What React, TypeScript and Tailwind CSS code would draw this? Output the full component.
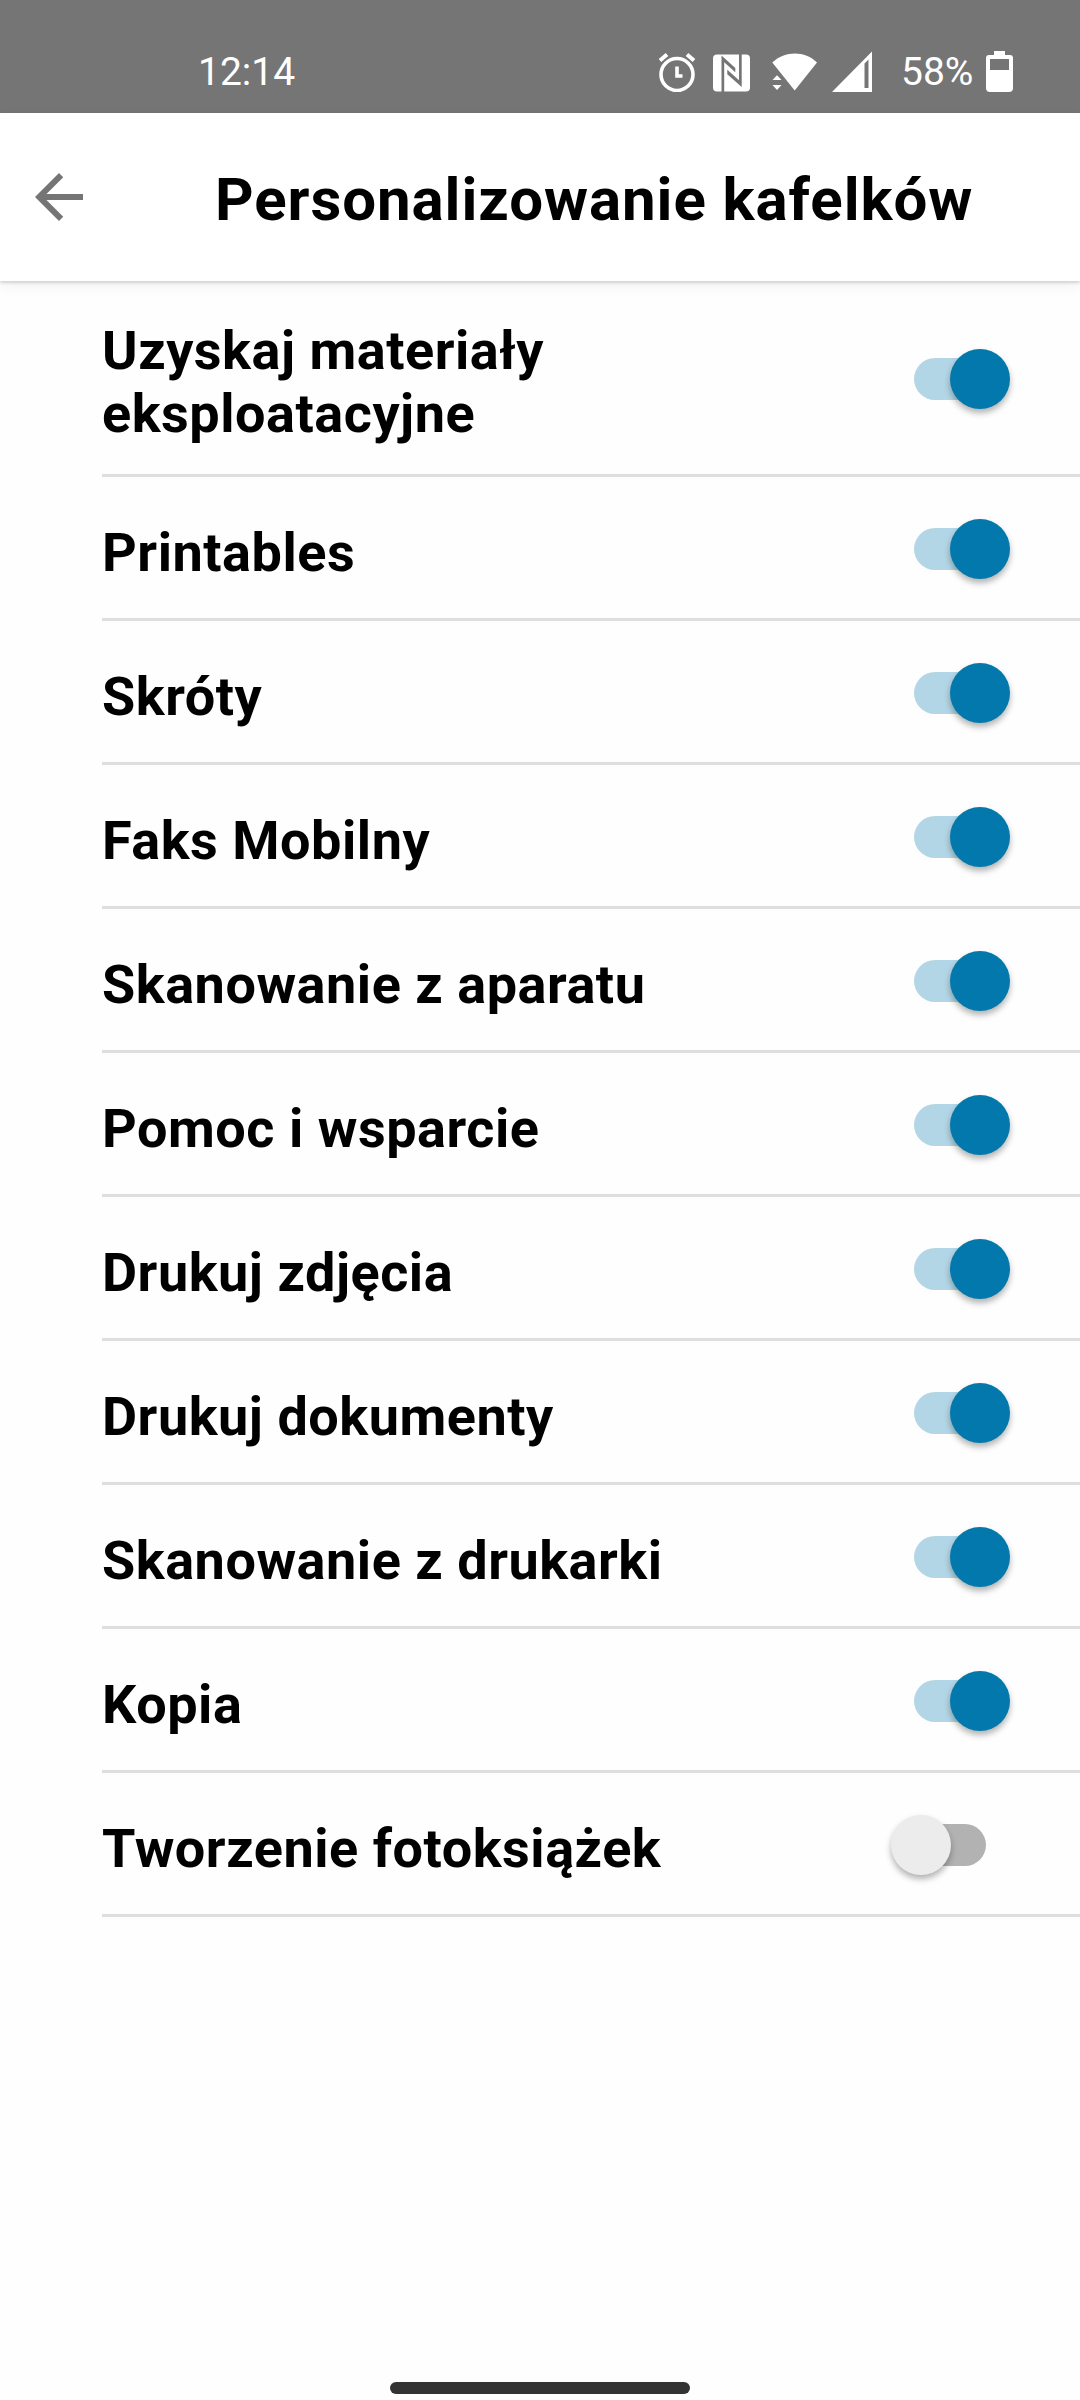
import { useState } from 'react';
import clsx from 'clsx';

const initialTiles = [
  { id: 'supplies', label: 'Uzyskaj materiały eksploatacyjne', enabled: true },
  { id: 'printables', label: 'Printables', enabled: true },
  { id: 'shortcuts', label: 'Skróty', enabled: true },
  { id: 'fax', label: 'Faks Mobilny', enabled: true },
  { id: 'camera-scan', label: 'Skanowanie z aparatu', enabled: true },
  { id: 'help', label: 'Pomoc i wsparcie', enabled: true },
  { id: 'photos', label: 'Drukuj zdjęcia', enabled: true },
  { id: 'documents', label: 'Drukuj dokumenty', enabled: true },
  { id: 'printer-scan', label: 'Skanowanie z drukarki', enabled: true },
  { id: 'copy', label: 'Kopia', enabled: true },
  { id: 'photobooks', label: 'Tworzenie fotoksiążek', enabled: false },
];

function StatusBar() {
  return (
    <div className="flex h-[113px] items-start bg-[#757575] pt-[51px] pl-[198px] text-white">
      <span className="mt-px w-[459px] text-[39px] leading-[41px]">12:14</span>
      <svg className="mr-4 h-[41px] w-10" viewBox="0 0 40 41" fill="none" stroke="currentColor">
        <circle cx="20" cy="23.5" r="16" strokeWidth="3.6" />
        <path d="M20 15.5v9.5h5.5" strokeWidth="3.6" />
        <path d="M3 9.5l7-6M37 9.5l-7-6" strokeWidth="4" />
      </svg>
      <svg className="mr-5 h-[41px] w-[37px]" viewBox="0 0 37 41">
        <rect y="3.5" width="37" height="37" rx="4" fill="currentColor" />
        <g fill="#757575">
          <path d="M8.5 4.5L22.3 17V21.3L11.2 11.3V41H8.5Z" />
          <path d="M28.7 3V36L14.3 23.3V18.7L26 29.2V3Z" />
        </g>
      </svg>
      <svg className="mr-[14px] h-[41px] w-[48px]" viewBox="0 0 48 41" fill="currentColor">
        <path d="M2.3 11.5C15 -.6 35 -.6 47 11.5L24.7 39.5Z" />
        <path d="M2.5 29L7 24.3L11.5 29ZM2.5 34H11.5L7 39Z" />
      </svg>
      <svg className="mr-[28px] h-[41px] w-[41px]" viewBox="0 0 41 41" fill="currentColor">
        <path fillRule="evenodd" d="M0 41L40 .5V41ZM32.5 12.5V37H36.5V8.5Z" />
      </svg>
      <span className="mt-px w-[85px] text-[39px] leading-[41px]">58%</span>
      <svg className="h-[41px] w-[27px]" viewBox="0 0 27 41" fill="currentColor">
        <path
          fillRule="evenodd"
          d="M8 0H19V4H24Q27 4 27 7V37Q27 41 23 41H4Q0 41 0 37V7Q0 4 3 4H8ZM4 8V19H23V8Z"
        />
      </svg>
    </div>
  );
}

function Header() {
  return (
    <header className="flex h-[168px] items-center bg-white pl-[23px] shadow-[0_2px_3px_rgba(0,0,0,0.14),0_4px_14px_rgba(0,0,0,0.06)]">
      <button type="button" aria-label="Wstecz" className="mr-[120px] text-[#757575]">
        <svg className="size-[72px]" viewBox="0 0 24 24" fill="currentColor">
          <path d="M20 11H7.83l5.59-5.59L12 4l-8 8 8 8 1.41-1.41L7.83 13H20v-2z" />
        </svg>
      </button>
      <h1 className="mt-[5px] text-[60px] leading-[70px] font-bold tracking-[0.93px]">
        Personalizowanie kafelków
      </h1>
    </header>
  );
}

interface SwitchProps {
  label: string;
  checked: boolean;
  onChange: () => void;
}

function Switch({ label, checked, onChange }: SwitchProps) {
  return (
    <button
      type="button"
      role="switch"
      aria-label={label}
      aria-checked={checked}
      onClick={onChange}
      className={clsx(
        'mt-[3px] flex h-[60px] w-24 shrink-0 items-center',
        checked ? 'mr-[70px] justify-end' : 'mr-[94px]',
      )}
    >
      <span
        className={clsx(
          'flex h-[42px] w-[84px] items-center rounded-full',
          checked ? 'mr-3 bg-[#b2d6e6]' : 'ml-3 bg-[#b2b2b2]',
        )}
      >
        <span
          className={clsx(
            'size-[60px] shrink-0 rounded-full shadow-[0_4px_6px_rgba(0,0,0,0.3)]',
            checked ? 'ml-[35.5px] bg-[#0378ac]' : '-ml-[11.5px] bg-[#ececec]',
          )}
        />
      </span>
    </button>
  );
}

export default function App() {
  const [tiles, setTiles] = useState(initialTiles);

  const toggleTile = (id: string) => {
    setTiles((prev) => prev.map((t) => (t.id === id ? { ...t, enabled: !t.enabled } : t)));
  };

  return (
    <div className="flex h-[2400px] w-[1080px] flex-col overflow-hidden bg-[#fefefe] font-['Roboto',sans-serif] text-black">
      <StatusBar />
      <Header />
      <ul className="flex flex-1 flex-col pl-[102px]">
        {tiles.map((tile) => (
          <li
            key={tile.id}
            className="flex h-36 items-center justify-between border-b-3 border-[#dedede] first:h-[196px]"
          >
            <span className="mt-[9px] max-w-[600px] text-[54px] leading-[63px] font-bold tracking-[0.53px]">
              {tile.label}
            </span>
            <Switch label={tile.label} checked={tile.enabled} onChange={() => toggleTile(tile.id)} />
          </li>
        ))}
      </ul>
      <div className="mx-auto mb-[6px] h-3 w-[300px] rounded-full bg-[#333333]" />
    </div>
  );
}
